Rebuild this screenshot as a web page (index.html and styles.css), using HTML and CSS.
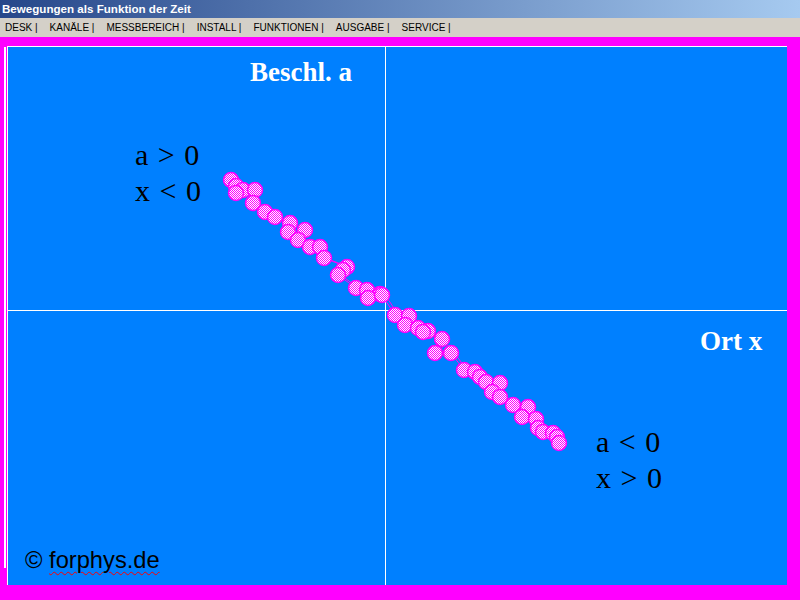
FILE: index.html
```html
<!DOCTYPE html>
<html lang="de">
  <head>
    <meta charset="utf-8">
    <title>Bewegungen als Funktion der Zeit</title>
    <link rel="stylesheet" href="styles.css">
  </head>
  <body>
    <div class="title-bar">Bewegungen als Funktion der Zeit</div>
    <div class="menu-bar">
      <span class="menu-item">DESK |</span>
      <span class="menu-item">KANÄLE |</span>
      <span class="menu-item">MESSBEREICH |</span>
      <span class="menu-item">INSTALL |</span>
      <span class="menu-item">FUNKTIONEN |</span>
      <span class="menu-item">AUSGABE |</span>
      <span class="menu-item">SERVICE |</span>
    </div>
    <div class="stage">
      <div class="plot">
        <svg class="plot-canvas" width="779" height="538" viewBox="8 47 779 538">
          <defs>
            <pattern id="chk" width="2" height="2" patternUnits="userSpaceOnUse">
              <rect width="2" height="2" fill="#fff"/>
              <rect width="1" height="1" fill="#f0f"/>
              <rect x="1" y="1" width="1" height="1" fill="#f0f"/>
            </pattern>
          </defs>
          <!-- Achsen -->
          <line x1="385.5" y1="47" x2="385.5" y2="585" stroke="#fff" stroke-width="1"/>
          <line x1="8" y1="310.5" x2="787" y2="310.5" stroke="#fff" stroke-width="1"/>
          <g id="track" fill="none" stroke="#f0f" stroke-width="1"></g>
          <g id="dots" fill="url(#chk)" stroke="#f0f" stroke-width="1.5"></g>
        </svg>
        <span class="axis-label label-a">Beschl. a</span>
        <span class="axis-label label-x">Ort x</span>
        <div class="cond cond-left">a &gt; 0<br>x &lt; 0</div>
        <div class="cond cond-right">a &lt; 0<br>x &gt; 0</div>
        <div class="copyright">© <span class="spell">forphys.de</span></div>
      </div>
    </div>
    <script>
      // Messpunkte (Seitenkoordinaten)
      const points = [
        [231,180],[236,186],[243,190],[236,193],[255,190],[253,203],[265,212],[275,217],
        [290,223],[288,232],[305,230],[298,240],[310,247],[320,247],[324,258],[347,267],
        [343,270],[338,275],[356,288],[367,290],[380,294],[368,298],[382,295],[395,315],
        [409,316],[405,325],[418,328],[428,331],[423,332],[442,339],[435,353],[451,353],
        [464,370],[475,372],[480,377],[486,382],[500,383],[492,392],[500,397],[513,405],
        [528,407],[522,417],[536,419],[538,428],[543,432],[553,433],[557,437],[559,443]
      ];
      const ns = 'http://www.w3.org/2000/svg';
      const track = document.getElementById('track');
      const dots = document.getElementById('dots');

      const line = document.createElementNS(ns, 'polyline');
      line.setAttribute('points', points.map(p => p.join(',')).join(' '));
      track.appendChild(line);
      const line2 = document.createElementNS(ns, 'polyline');
      line2.setAttribute('points', points.map(p => (p[0] + 4) + ',' + (p[1] + 1)).join(' '));
      track.appendChild(line2);

      points.forEach(p => {
        const c = document.createElementNS(ns, 'circle');
        c.setAttribute('cx', p[0]);
        c.setAttribute('cy', p[1]);
        c.setAttribute('r', 7.5);
        dots.appendChild(c);
      });
    </script>
  </body>
</html>
```

FILE: styles.css
```css
body {
  margin: 0;
  width: 800px;
  height: 600px;
  overflow: hidden;
  display: flex;
  flex-direction: column;
  background: #ff00ff;
  font-family: "Liberation Sans", Arial, sans-serif;
}
.title-bar {
  height: 18px;
  line-height: 18px;
  padding-left: 2px;
  background: linear-gradient(to right, #26478a, #a6caf0);
  color: white;
  font-weight: bold;
  font-size: 11.6px;
}
.menu-bar {
  height: 19px;
  display: flex;
  align-items: center;
  gap: 12px;
  padding-left: 5px;
  background: #d4d0c8;
  color: black;
  font-size: 10px;
}
.stage {
  flex: 1;
  padding: 9px 0 0 7px;
  position: relative;
}
.stage::before {
  content: "";
  position: absolute;
  left: 4px;
  top: 10px;
  width: 2px;
  height: 521px;
  background: white;
}
.plot {
  position: relative;
  width: 779px;
  height: 538px;
  border-top: 1px solid white;
  border-left: 1px solid white;
  background: #0080ff;
}
.plot-canvas {
  display: block;
}
.axis-label {
  position: absolute;
  color: white;
  font-family: "Liberation Serif", "Times New Roman", serif;
  font-weight: bold;
  font-size: 27px;
  line-height: 1;
}
.label-a {
  left: 242px;
  top: 12px;
}
.label-x {
  left: 692px;
  top: 281px;
}
.cond {
  position: absolute;
  font-family: "Liberation Serif", "Times New Roman", serif;
  font-size: 30px;
  word-spacing: 2px;
  line-height: 36px;
  color: black;
}
.cond-left {
  left: 127px;
  top: 90px;
}
.cond-right {
  left: 588px;
  top: 377px;
}
.copyright {
  position: absolute;
  left: 17px;
  top: 500px;
  font-size: 23.7px;
  color: black;
}
.spell {
  text-decoration: underline wavy red;
  text-decoration-thickness: 1px;
  text-underline-offset: 3px;
}
```
